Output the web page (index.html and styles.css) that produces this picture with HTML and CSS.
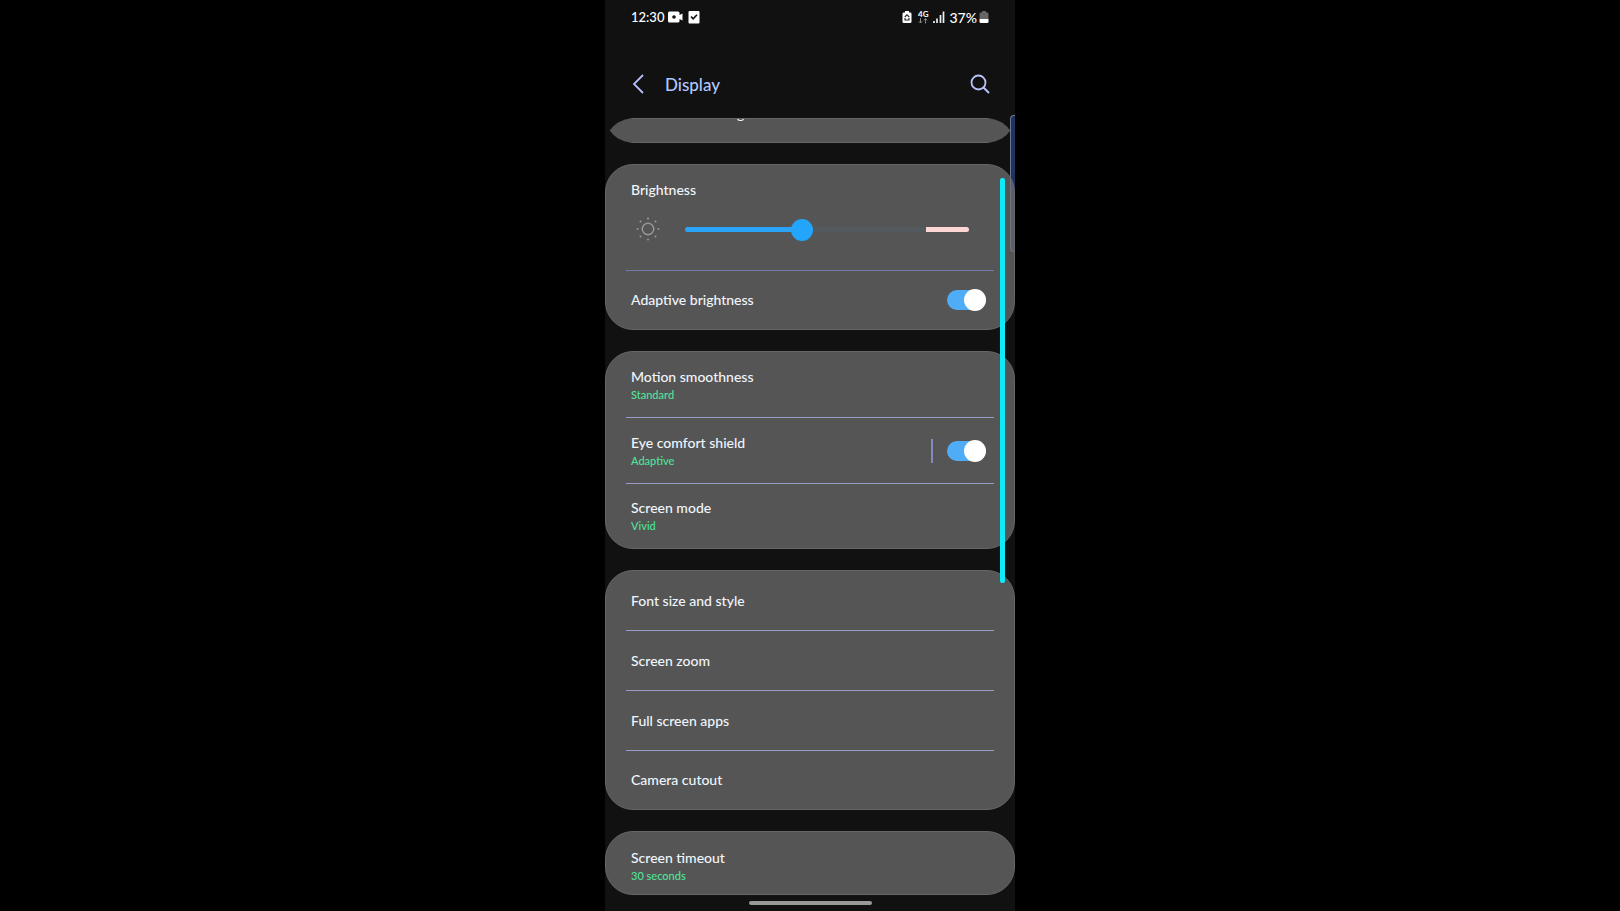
FILE: index.html
```
<!DOCTYPE html>
<html lang="en">
<head>
  <meta charset="utf-8">
  <meta name="viewport" content="width=device-width, initial-scale=1">
  <title>Display</title>
  <link rel="stylesheet" href="styles.css">
</head>
<body>
  <div class="phone">
    <div class="edge-handle"></div>

    <div class="status">
      <span class="time">12:30</span>
      <svg class="cam" width="16" height="14" viewBox="0 0 16 14">
        <path fill="#fff" fill-rule="evenodd" d="M1.500 1.500h8.500q1.500 0 1.500 1.500v2l3-1.500v7l-3-1.500v2q0 1.500-1.500 1.500H1.500Q0 12.500 0 11V3Q0 1.500 1.500 1.500zM6 5.200a1.800 1.800 0 1 0 0 3.600a1.800 1.800 0 1 0 0-3.600z"/>
      </svg>
      <svg width="12" height="14" viewBox="0 0 12 14">
        <rect x="0.500" y="1" width="11" height="12.500" rx="1" fill="#fff"/>
        <path d="M3 6.500l2.200 2.300L9 4.700" fill="none" stroke="#111" stroke-width="1.600"/>
      </svg>
      <span class="space"></span>
      <svg class="saver" width="10" height="14" viewBox="0 0 10 14">
        <path fill="#fff" d="M3 1h4v1.500h1.200q1.300 0 1.300 1.300v7.900q0 1.300-1.300 1.300H1.800Q.5 13 .5 11.700V3.800Q.5 2.500 1.800 2.500H3z"/>
        <path d="M2.800 7l2.200-2.300L7.200 7M3 8v2h4V8" fill="none" stroke="#222" stroke-width="1.100"/>
      </svg>
      <span class="net">4G
        <svg width="10" height="6" viewBox="0 0 10 6">
          <path d="M2.500 0v5M.8 3.300l1.700 1.700l1.700-1.700M7.500 5.500V.7M5.800 2.300L7.500.6l1.700 1.700" fill="none" stroke="#888" stroke-width="1"/>
        </svg>
      </span>
      <svg class="signal" width="12" height="14" viewBox="0 0 12 14">
        <path d="M1 13v-2M4 13V8.500M7.500 13V5M10.500 13V1.500" fill="none" stroke="#eee" stroke-width="1.700"/>
      </svg>
      <span class="percent">37%</span>
      <svg width="10" height="14" viewBox="0 0 10 14">
        <path fill="#666" d="M3 1h4v1.500h1.200q1.300 0 1.300 1.300V9H.5V3.800Q.5 2.500 1.800 2.500H3z"/>
        <path fill="#fff" d="M.5 9h9v2.700q0 1.300-1.300 1.300H1.800Q.5 13 .5 11.700z"/>
      </svg>
    </div>

    <header class="header">
      <button class="icon-btn" aria-label="Back">
        <svg width="14" height="22" viewBox="0 0 14 22"><path d="M12 2L3 11l9 9" fill="none" stroke="#b4bdf5" stroke-width="1.800"/></svg>
      </button>
      <h1>Display</h1>
      <button class="icon-btn" aria-label="Search">
        <svg width="20" height="20" viewBox="0 0 20 20"><circle cx="8.500" cy="8.500" r="7" fill="none" stroke="#b9c3fa" stroke-width="1.800"/><path d="M13.500 13.500l5.500 5.500" stroke="#b9c3fa" stroke-width="2"/></svg>
      </button>
    </header>

    <main>
      <section class="card cut">
        <a href="#" class="cut-row">Dark mode settings</a>
      </section>

      <section class="card">
        <div class="row bright">
          <label class="name" for="bright">Brightness</label>
          <div class="slide">
            <svg width="26" height="26" viewBox="0 0 26 26">
              <circle cx="13" cy="13" r="5.700" fill="none" stroke="#999" stroke-width="1.400"/>
              <g fill="#999">
                <circle cx="13" cy="2.500" r="1"/><circle cx="13" cy="23.500" r="1"/>
                <circle cx="2.500" cy="13" r="1"/><circle cx="23.500" cy="13" r="1"/>
                <circle cx="5.500" cy="5.500" r="1"/><circle cx="20.500" cy="5.500" r="1"/>
                <circle cx="5.500" cy="20.500" r="1"/><circle cx="20.500" cy="20.500" r="1"/>
              </g>
            </svg>
            <input type="range" id="bright" min="0" max="255" value="103">
          </div>
        </div>
        <div class="row">
          <label class="name" for="adaptive">Adaptive brightness</label>
          <input type="checkbox" class="switch" id="adaptive" checked>
        </div>
      </section>

      <section class="card two-line">
        <a href="#" class="row"><span class="name">Motion smoothness<small>Standard</small></span></a>
        <div class="row">
          <label class="name" for="eye">Eye comfort shield<small>Adaptive</small></label>
          <span class="bar"></span>
          <input type="checkbox" class="switch" id="eye" checked>
        </div>
        <a href="#" class="row"><span class="name">Screen mode<small>Vivid</small></span></a>
      </section>

      <section class="card">
        <a href="#" class="row"><span class="name">Font size and style</span></a>
        <a href="#" class="row"><span class="name">Screen zoom</span></a>
        <a href="#" class="row"><span class="name">Full screen apps</span></a>
        <a href="#" class="row"><span class="name">Camera cutout</span></a>
      </section>

      <section class="card timeout">
        <a href="#" class="row"><span class="name">Screen timeout<small>30 seconds</small></span></a>
      </section>
    </main>

    <div class="home"></div>
    <div class="scroll-line"></div>
  </div>
</body>
</html>
```
FILE: styles.css
```
* {
  box-sizing: border-box;
}
body {
  margin: 0;
  background: #000;
  color: #f0f6fc;
  font-family: Lato, "Open Sans", sans-serif;
  font-size: 14px;
  font-weight: 500;
}
a {
  color: inherit;
  text-decoration: none;
}
svg {
  display: block;
  flex: none;
}
.phone {
  position: relative;
  display: flex;
  flex-direction: column;
  width: 100%;
  max-width: 410px;
  height: 100vh;
  margin: 0 auto;
  background: #111;
  overflow: hidden;
}

/* status bar */
.status {
  display: flex;
  align-items: center;
  height: 34px;
  padding: 0 26px;
  color: #fff;
}
.time {
  margin-right: 4px;
  font-size: 13px;
}
.cam {
  margin-right: 4px;
}
.space {
  flex: 1;
}
.saver {
  margin-right: 6px;
}
.net {
  display: flex;
  flex-direction: column;
  align-items: center;
  margin-right: 5px;
  font-size: 8px;
  font-weight: bold;
  line-height: 8px;
}
.signal {
  margin-right: 4px;
}
.percent {
  margin-right: 2px;
}

/* title */
.header {
  display: flex;
  align-items: center;
  height: 68px;
  margin-top: 16px;
  padding: 0 25px 0 26px;
}
.header h1 {
  flex: 1;
  margin: 0 0 0 20px;
  color: #b0c6ff;
  font-size: 17px;
  font-weight: 500;
}
.icon-btn {
  padding: 0;
  border: none;
  background: none;
  cursor: pointer;
}

/* cards */
main {
  display: flex;
  flex-direction: column;
  gap: 21px;
}
.card {
  position: relative;
  flex: none;
  padding: 0 20px;
  border: 1px solid #666;
  border-radius: 28px;
  background: rgba(114, 114, 114, 0.7);
}
/* card that is scrolled half under the title, its ends come to a point */
.cut {
  height: 25px;
  margin: 0 5px;
  border-radius: 0;
  overflow: hidden;
  clip-path: polygon(0 50%, 3px 34%, 8px 18%, 15px 6%, 24px 0, calc(100% - 24px) 0, calc(100% - 15px) 6%, calc(100% - 8px) 18%, calc(100% - 3px) 34%, 100% 50%, calc(100% - 3px) 66%, calc(100% - 8px) 82%, calc(100% - 15px) 94%, calc(100% - 24px) 100%, 24px 100%, 15px 94%, 8px 82%, 3px 66%);
}
.cut-row {
  display: block;
  margin-top: -15px;
  line-height: 20px;
}
.row {
  display: flex;
  align-items: center;
  height: 60px;
  padding: 0 8px 0 5px;
  border-bottom: 1px solid #9a9cc8;
}
.row:last-child {
  height: 58px;
  border-bottom: none;
}
.name {
  flex: 1;
  line-height: 20px;
}
.name small {
  display: block;
  color: #4fe39a;
  font-size: 11px;
  line-height: 16px;
}
.two-line .row {
  height: 66px;
}
.two-line .row:last-child {
  height: 64px;
}
.timeout .row:last-child {
  height: 62px;
  padding-top: 6px;
}

/* brightness */
.row.bright {
  display: block;
  height: 106px;
  padding-top: 15px;
  padding-right: 25px;
  border-color: #7378a8;
}
.slide {
  display: flex;
  align-items: center;
  gap: 24px;
  padding: 16px 0 0 4px;
}
.slide input {
  -webkit-appearance: none;
  appearance: none;
  flex: 1;
  min-width: 0;
  height: 22px;
  margin: 0;
  background: none;
}
.slide input::-webkit-slider-runnable-track {
  height: 5px;
  border-radius: 3px;
  background: linear-gradient(90deg, #2aa4f8 41%, #535a5f 41%, #535a5f 85%, #ffd6d6 85%);
}
.slide input::-webkit-slider-thumb {
  -webkit-appearance: none;
  width: 22px;
  height: 22px;
  margin-top: -8px;
  border-radius: 50%;
  background: #22a5fb;
}

.switch {
  -webkit-appearance: none;
  appearance: none;
  display: flex;
  align-items: center;
  justify-content: flex-end;
  width: 39px;
  height: 20px;
  margin: 0;
  border-radius: 10px;
  background: #4fadf8;
}
.switch::before {
  content: "";
  width: 22px;
  height: 22px;
  flex: none;
  border-radius: 50%;
  background: #fff;
}
.bar {
  width: 2px;
  height: 24px;
  margin-right: 14px;
  background: #8589bd;
}

/* bottom bar and overlays */
.home {
  width: 30%;
  height: 4px;
  margin: 6px auto;
  border-radius: 2px;
  background: #999;
}
.edge-handle {
  position: absolute;
  top: 115px;
  right: 0;
  width: 5px;
  height: 137px;
  border: 1px solid #6c7890;
  border-right: none;
  border-radius: 4px 0 0 4px;
  background: #1f3260;
}
.scroll-line {
  position: absolute;
  top: 178px;
  right: 10px;
  width: 5px;
  height: 405px;
  border-radius: 2px;
  background: #0eeaf8;
}
```
